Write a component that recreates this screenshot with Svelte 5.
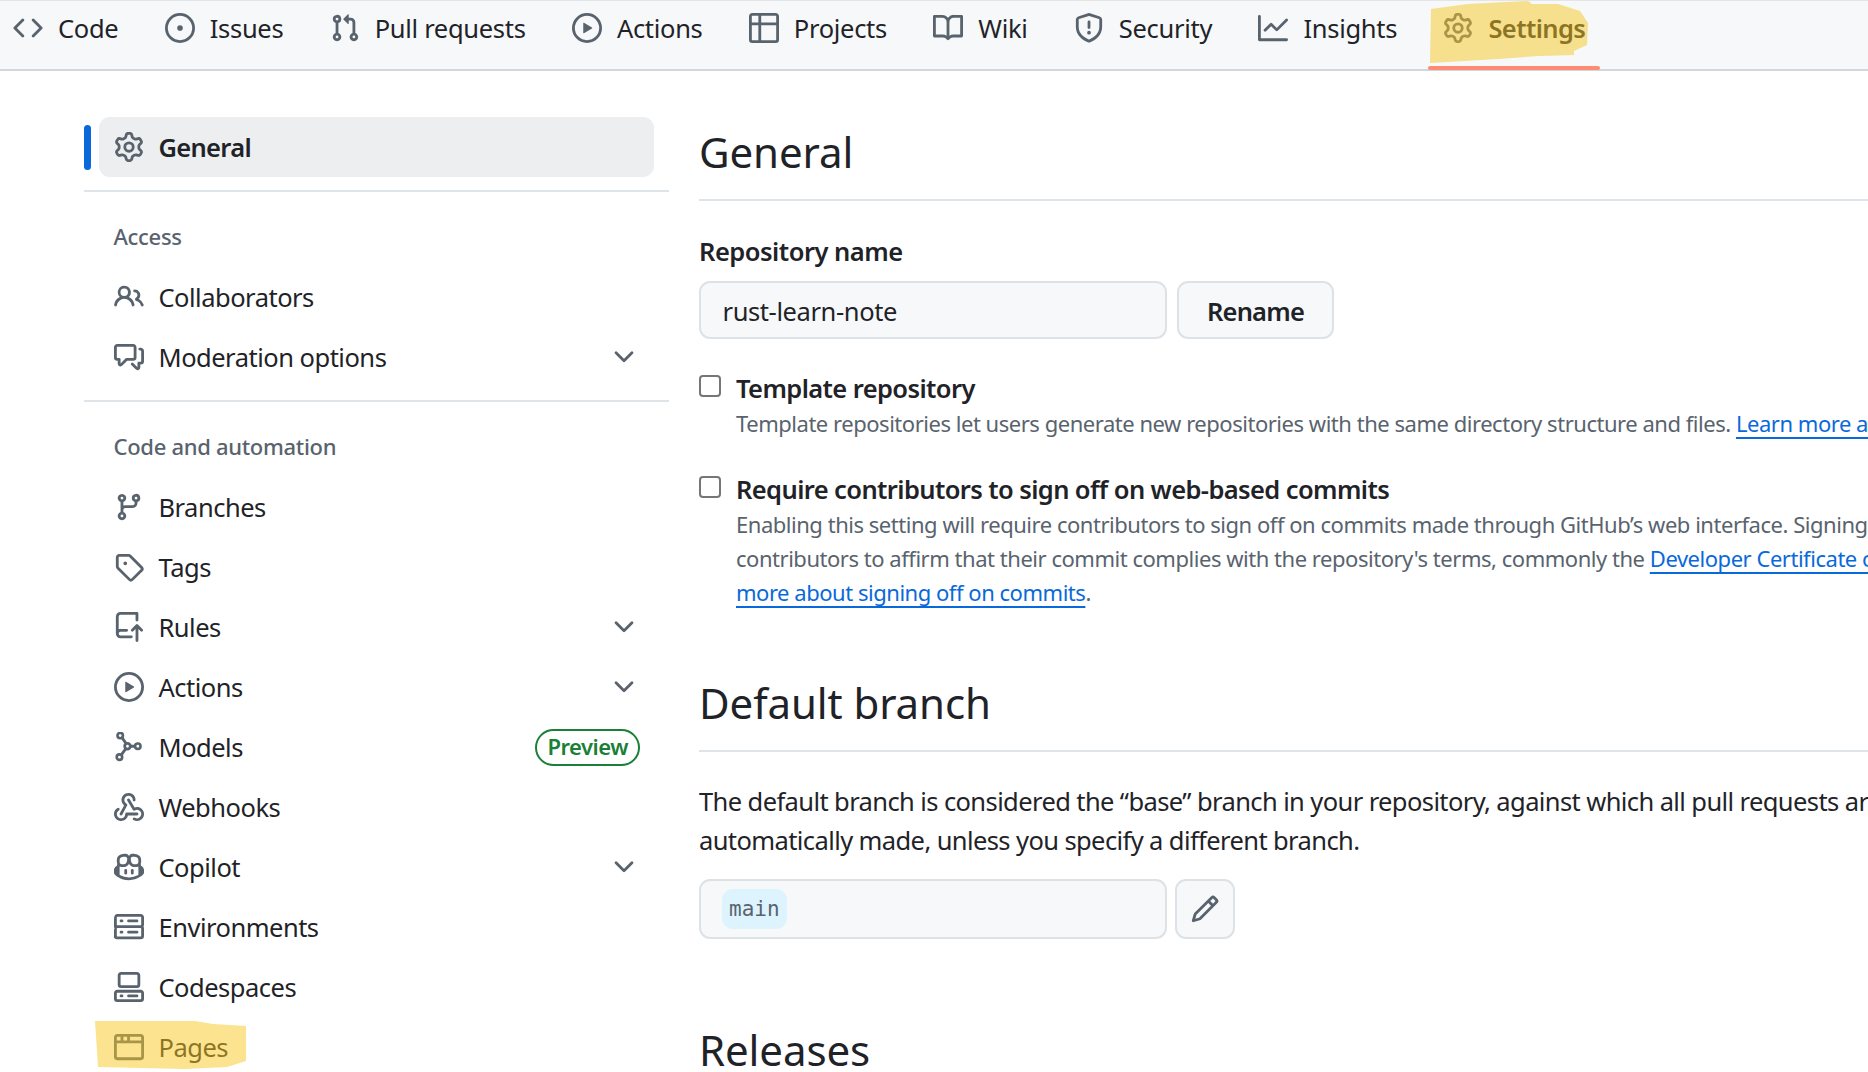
<script>
  const icons = {
    code: 'm11.28 3.22 4.25 4.25a.75.75 0 0 1 0 1.06l-4.25 4.25a.749.749 0 0 1-1.275-.326.749.749 0 0 1 .215-.734L13.94 8l-3.72-3.72a.749.749 0 0 1 .326-1.275.749.749 0 0 1 .734.215Zm-6.56 0a.751.751 0 0 1 1.042.018.751.751 0 0 1 .018 1.042L2.06 8l3.72 3.72a.749.749 0 0 1-.326 1.275.749.749 0 0 1-.734-.215L.47 8.53a.75.75 0 0 1 0-1.06Z',
    issue: 'M8 9.5a1.5 1.5 0 1 0 0-3 1.5 1.5 0 0 0 0 3Z M8 0a8 8 0 1 1 0 16A8 8 0 0 1 8 0ZM1.5 8a6.5 6.5 0 1 0 13 0 6.5 6.5 0 0 0-13 0Z',
    pull: 'M1.5 3.25a2.25 2.25 0 1 1 3 2.122v5.256a2.251 2.251 0 1 1-1.5 0V5.372A2.25 2.25 0 0 1 1.5 3.25Zm5.677-.177L9.573.677A.25.25 0 0 1 10 .854V2.5h1A2.5 2.5 0 0 1 13.5 5v5.628a2.251 2.251 0 1 1-1.5 0V5a1 1 0 0 0-1-1h-1v1.646a.25.25 0 0 1-.427.177L7.177 3.427a.25.25 0 0 1 0-.354ZM3.75 2.5a.75.75 0 1 0 0 1.5.75.75 0 0 0 0-1.5Zm0 9.5a.75.75 0 1 0 0 1.5.75.75 0 0 0 0-1.5Zm8.25.75a.75.75 0 1 0 1.5 0 .75.75 0 0 0-1.5 0Z',
    play: 'M8 0a8 8 0 1 1 0 16A8 8 0 0 1 8 0ZM1.5 8a6.5 6.5 0 1 0 13 0 6.5 6.5 0 0 0-13 0Zm4.879-2.773 4.264 2.559a.25.25 0 0 1 0 .428l-4.264 2.559A.25.25 0 0 1 6 10.559V5.442a.25.25 0 0 1 .379-.215Z',
    table: 'M0 1.75C0 .784.784 0 1.75 0h12.5C15.216 0 16 .784 16 1.75v12.5A1.75 1.75 0 0 1 14.25 16H1.75A1.75 1.75 0 0 1 0 14.25ZM6.5 6.5v8h7.75a.25.25 0 0 0 .25-.25V6.5Zm8-1.5V1.75a.25.25 0 0 0-.25-.25H6.5V5Zm-13 1.5v7.75c0 .138.112.25.25.25H5v-8ZM5 5V1.5H1.75a.25.25 0 0 0-.25.25V5Z',
    book: 'M0 1.75A.75.75 0 0 1 .75 1h4.253c1.227 0 2.317.59 3 1.501A3.743 3.743 0 0 1 11.006 1h4.245a.75.75 0 0 1 .75.75v10.5a.75.75 0 0 1-.75.75h-4.507a2.25 2.25 0 0 0-1.591.659l-.622.621a.75.75 0 0 1-1.06 0l-.622-.621A2.25 2.25 0 0 0 5.258 13H.75a.75.75 0 0 1-.75-.75Zm7.251 10.324.004-5.073-.002-2.253A2.25 2.25 0 0 0 5.003 2.5H1.5v9h3.757a3.75 3.75 0 0 1 1.994.574ZM8.755 4.75l-.004 7.322a3.752 3.752 0 0 1 1.992-.572H14.5v-9h-3.495a2.25 2.25 0 0 0-2.25 2.25Z',
    shield: 'M7.467.133a1.748 1.748 0 0 1 1.066 0l5.25 1.68A1.75 1.75 0 0 1 15 3.48V7c0 1.566-.32 3.182-1.303 4.682-.983 1.498-2.585 2.813-5.032 3.855a1.697 1.697 0 0 1-1.33 0c-2.447-1.042-4.049-2.357-5.032-3.855C1.32 10.182 1 8.566 1 7V3.48a1.75 1.75 0 0 1 1.217-1.667Zm.61 1.429a.25.25 0 0 0-.153 0l-5.25 1.68a.25.25 0 0 0-.174.238V7c0 1.358.275 2.666 1.057 3.86.784 1.194 2.121 2.34 4.366 3.297a.196.196 0 0 0 .154 0c2.245-.956 3.582-2.104 4.366-3.298C13.225 9.666 13.5 8.36 13.5 7V3.48a.251.251 0 0 0-.174-.237l-5.25-1.68ZM8.75 4.75v3a.75.75 0 0 1-1.5 0v-3a.75.75 0 0 1 1.5 0ZM9 10.5a1 1 0 1 1-2 0 1 1 0 0 1 2 0Z',
    graph: 'M1.5 1.75V13.5h13.75a.75.75 0 0 1 0 1.5H.75a.75.75 0 0 1-.75-.75V1.75a.75.75 0 0 1 1.5 0Zm14.28 2.53-5.25 5.25a.75.75 0 0 1-1.06 0L7 7.06 4.28 9.78a.751.751 0 0 1-1.042-.018.751.751 0 0 1-.018-1.042l3.25-3.25a.75.75 0 0 1 1.06 0L10 7.94l4.72-4.72a.751.751 0 0 1 1.042.018.751.751 0 0 1 .018 1.042Z',
    gear: 'M8 0a8.2 8.2 0 0 1 .701.031C9.444.095 9.99.645 10.16 1.29l.288 1.107c.018.066.079.158.212.224.231.114.454.243.668.386.123.082.233.09.299.071l1.103-.303c.644-.176 1.392.021 1.82.63.27.385.506.792.704 1.218.315.675.111 1.422-.364 1.891l-.814.806c-.049.048-.098.147-.088.294.016.257.016.515 0 .772-.01.147.038.246.088.294l.814.806c.475.469.679 1.216.364 1.891a7.977 7.977 0 0 1-.704 1.217c-.428.61-1.176.807-1.82.63l-1.102-.302c-.067-.019-.177-.011-.3.071a5.909 5.909 0 0 1-.668.386c-.133.066-.194.158-.211.224l-.29 1.106c-.168.646-.715 1.196-1.458 1.26a8.006 8.006 0 0 1-1.402 0c-.743-.064-1.289-.614-1.458-1.26l-.289-1.106c-.018-.066-.079-.158-.212-.224a5.738 5.738 0 0 1-.668-.386c-.123-.082-.233-.09-.299-.071l-1.103.303c-.644.176-1.392-.021-1.82-.63a8.12 8.12 0 0 1-.704-1.218c-.315-.675-.111-1.422.363-1.891l.815-.806c.05-.048.098-.147.088-.294a6.214 6.214 0 0 1 0-.772c.01-.147-.038-.246-.088-.294l-.815-.806C.635 6.045.431 5.298.746 4.623a7.92 7.92 0 0 1 .704-1.217c.428-.61 1.176-.807 1.82-.63l1.102.302c.067.019.177.011.3-.071.214-.143.437-.272.668-.386.133-.066.194-.158.211-.224l.29-1.106C6.009.645 6.556.095 7.299.03 7.53.01 7.764 0 8 0Zm-.571 1.525c-.036.003-.108.036-.137.146l-.289 1.105c-.147.561-.549.967-.998 1.189-.173.086-.34.183-.5.29-.417.278-.97.423-1.529.27l-1.103-.303c-.109-.03-.175.016-.195.045-.22.312-.412.644-.573.99-.014.031-.021.11.059.19l.815.806c.411.406.562.957.53 1.456a4.709 4.709 0 0 0 0 .582c.032.499-.119 1.05-.53 1.456l-.815.806c-.081.08-.073.159-.059.19.162.346.353.677.573.989.02.03.085.076.195.046l1.102-.303c.56-.153 1.113-.008 1.53.27.161.107.328.204.501.29.447.222.85.629.997 1.189l.289 1.105c.029.109.101.143.137.146a6.6 6.6 0 0 0 1.142 0c.036-.003.108-.036.137-.146l.289-1.105c.147-.561.549-.967.998-1.189.173-.086.34-.183.5-.29.417-.278.97-.423 1.529-.27l1.103.303c.109.029.175-.016.195-.045.22-.313.411-.644.573-.99.014-.031.021-.11-.059-.19l-.815-.806c-.411-.406-.562-.957-.53-1.456a4.709 4.709 0 0 0 0-.582c-.032-.499.119-1.05.53-1.456l.815-.806c.081-.08.073-.159.059-.19a6.464 6.464 0 0 0-.573-.989c-.02-.03-.085-.076-.195-.046l-1.102.303c-.56.153-1.113.008-1.53-.27a4.44 4.44 0 0 0-.501-.29c-.447-.222-.85-.629-.997-1.189l-.289-1.105c-.029-.11-.101-.143-.137-.146a6.6 6.6 0 0 0-1.142 0ZM11 8a3 3 0 1 1-6 0 3 3 0 0 1 6 0ZM9.5 8a1.5 1.5 0 1 0-3.001.001A1.5 1.5 0 0 0 9.5 8Z',
    people: 'M2 5.5a3.5 3.5 0 1 1 5.898 2.549 5.508 5.508 0 0 1 3.034 4.084.75.75 0 1 1-1.482.235 4 4 0 0 0-7.9 0 .75.75 0 0 1-1.482-.236A5.507 5.507 0 0 1 3.102 8.05 3.493 3.493 0 0 1 2 5.5ZM11 4a3.001 3.001 0 0 1 2.22 5.018 5.01 5.01 0 0 1 2.56 3.012.749.749 0 0 1-.885.954.752.752 0 0 1-.549-.514 3.507 3.507 0 0 0-2.522-2.372.75.75 0 0 1-.574-.73v-.352a.75.75 0 0 1 .416-.672A1.5 1.5 0 0 0 11 5.5.75.75 0 0 1 11 4Zm-5.5-.5a2 2 0 1 0-.001 3.999A2 2 0 0 0 5.5 3.5Z',
    comment: 'M1.75 1h8.5c.966 0 1.75.784 1.75 1.75v5.5A1.75 1.75 0 0 1 10.25 10H7.061l-2.574 2.573A1.458 1.458 0 0 1 2 11.543V10h-.25A1.75 1.75 0 0 1 0 8.25v-5.5C0 1.784.784 1 1.75 1ZM1.5 2.75v5.5c0 .138.112.25.25.25h1a.75.75 0 0 1 .75.75v2.19l2.72-2.72a.749.749 0 0 1 .53-.22h3.5a.25.25 0 0 0 .25-.25v-5.5a.25.25 0 0 0-.25-.25h-8.5a.25.25 0 0 0-.25.25Zm13 2a.25.25 0 0 0-.25-.25h-.5a.75.75 0 0 1 0-1.5h.5c.966 0 1.75.784 1.75 1.75v5.5A1.75 1.75 0 0 1 14.25 12H14v1.543a1.458 1.458 0 0 1-2.487 1.03L9.22 12.28a.749.749 0 0 1 .326-1.275.749.749 0 0 1 .734.215l2.22 2.22v-2.19a.75.75 0 0 1 .75-.75h1a.25.25 0 0 0 .25-.25Z',
    chevron: 'M12.78 5.22a.749.749 0 0 1 0 1.06l-4.25 4.25a.749.749 0 0 1-1.06 0L3.22 6.28a.749.749 0 1 1 1.06-1.06L8 8.939l3.72-3.719a.749.749 0 0 1 1.06 0Z',
    branch: 'M9.5 3.25a2.25 2.25 0 1 1 3 2.122V6A2.5 2.5 0 0 1 10 8.5H6a1 1 0 0 0-1 1v1.128a2.251 2.251 0 1 1-1.5 0V5.372a2.25 2.25 0 1 1 1.5 0v1.836A2.493 2.493 0 0 1 6 7h4a1 1 0 0 0 1-1v-.628A2.25 2.25 0 0 1 9.5 3.25Zm-6 0a.75.75 0 1 0 1.5 0 .75.75 0 0 0-1.5 0Zm8.25-.75a.75.75 0 1 0 0 1.5.75.75 0 0 0 0-1.5ZM4.25 12a.75.75 0 1 0 0 1.5.75.75 0 0 0 0-1.5Z',
    tag: 'M1 7.775V2.75C1 1.784 1.784 1 2.75 1h5.025c.464 0 .91.184 1.238.513l6.25 6.25a1.75 1.75 0 0 1 0 2.474l-5.026 5.026a1.75 1.75 0 0 1-2.474 0l-6.25-6.25A1.752 1.752 0 0 1 1 7.775Zm1.5 0c0 .066.026.13.073.177l6.25 6.25a.25.25 0 0 0 .354 0l5.025-5.025a.25.25 0 0 0 0-.354l-6.25-6.25a.25.25 0 0 0-.177-.073H2.75a.25.25 0 0 0-.25.25ZM6 5a1 1 0 1 1 0 2 1 1 0 0 1 0-2Z',
    rules: 'M1 2.5A2.5 2.5 0 0 1 3.5 0h8.75a.75.75 0 0 1 .75.75v3.5a.75.75 0 0 1-1.5 0V1.5h-8a1 1 0 0 0-1 1v6.708A2.492 2.492 0 0 1 3.5 9h3.25a.75.75 0 0 1 0 1.5H3.5a1 1 0 0 0 0 2h5.75a.75.75 0 0 1 0 1.5H3.5A2.5 2.5 0 0 1 1 11.5Zm13.23 7.79h-.001l-1.224-1.224v6.184a.75.75 0 0 1-1.5 0V9.066L10.28 10.29a.75.75 0 0 1-1.06-1.061l2.505-2.504a.75.75 0 0 1 1.06 0L15.29 9.23a.751.751 0 0 1-.018 1.042.751.751 0 0 1-1.042.018Z',
    webhook: 'M5.5 4.25a2.25 2.25 0 0 1 4.5 0 .75.75 0 0 0 1.5 0 3.75 3.75 0 1 0-6.14 2.889l-2.272 4.258a.75.75 0 0 0 1.324.706L7 7.25a.75.75 0 0 0-.309-1.015A2.25 2.25 0 0 1 5.5 4.25Z M7.364 3.607a.75.75 0 0 1 1.03.257l2.608 4.349a3.75 3.75 0 1 1-.628 6.785.75.75 0 0 1 .752-1.299 2.25 2.25 0 1 0-.033-3.88.75.75 0 0 1-1.03-.256L7.107 4.636a.75.75 0 0 1 .257-1.03Z M2.9 8.776A.75.75 0 0 1 2.625 9.8 2.25 2.25 0 1 0 6 11.75a.75.75 0 0 1 .75-.751h5.5a.75.75 0 0 1 0 1.5H7.425a3.751 3.751 0 1 1-5.55-3.998.75.75 0 0 1 1.024.274Z',
    copilot: 'M7.998 15.035c-4.562 0-7.873-2.914-7.998-3.749V9.338c.085-.628.677-1.686 1.588-2.065.013-.07.024-.143.036-.218.029-.183.06-.384.126-.612-.201-.508-.254-1.084-.254-1.656 0-.87.128-1.769.693-2.484.579-.733 1.494-1.124 2.724-1.261 1.206-.134 2.262.034 2.944.765.05.053.096.108.139.165.044-.057.094-.112.143-.165.682-.731 1.738-.899 2.944-.765 1.23.137 2.145.528 2.724 1.261.566.715.693 1.614.693 2.484 0 .572-.053 1.148-.254 1.656.066.228.098.429.126.612.012.076.024.148.037.218.924.385 1.522 1.471 1.591 2.095v1.872c0 .766-3.351 3.795-8.002 3.795Zm0-1.485c2.28 0 4.584-1.11 5.002-1.433V7.862l-.023-.116c-.49.21-1.075.291-1.727.291-1.146 0-2.059-.327-2.71-.991A3.222 3.222 0 0 1 8 6.303a3.24 3.24 0 0 1-.544.743c-.65.664-1.563.991-2.71.991-.652 0-1.236-.081-1.727-.291l-.023.116v4.255c.419.323 2.722 1.433 5.002 1.433ZM6.762 2.83c-.193-.206-.637-.413-1.682-.297-1.019.113-1.479.404-1.713.7-.247.312-.369.789-.369 1.554 0 .793.129 1.171.308 1.371.162.181.519.379 1.442.379.853 0 1.339-.235 1.638-.54.315-.322.527-.827.617-1.553.117-.935-.037-1.395-.241-1.614Zm4.155-.297c-1.044-.116-1.488.091-1.681.297-.204.219-.359.679-.242 1.614.091.726.303 1.231.618 1.553.299.305.784.54 1.638.54.922 0 1.28-.198 1.442-.379.179-.2.308-.578.308-1.371 0-.765-.123-1.242-.37-1.554-.233-.296-.693-.587-1.713-.7Z M6.25 9.037a.75.75 0 0 1 .75.75v1.501a.75.75 0 0 1-1.5 0V9.787a.75.75 0 0 1 .75-.75Zm4.25.75v1.501a.75.75 0 0 1-1.5 0V9.787a.75.75 0 0 1 1.5 0Z',
    server: 'M1.75 1h12.5c.966 0 1.75.784 1.75 1.75v4c0 .372-.116.717-.314 1 .198.283.314.628.314 1v4a1.75 1.75 0 0 1-1.75 1.75H1.75A1.75 1.75 0 0 1 0 13.75v-4c0-.372.116-.717.314-1a1.739 1.739 0 0 1-.314-1v-4C0 1.784.784 1 1.75 1ZM1.5 2.75v4c0 .138.112.25.25.25h12.5a.25.25 0 0 0 .25-.25v-4a.25.25 0 0 0-.25-.25H1.75a.25.25 0 0 0-.25.25Zm.25 5.75a.25.25 0 0 0-.25.25v4c0 .138.112.25.25.25h12.5a.25.25 0 0 0 .25-.25v-4a.25.25 0 0 0-.25-.25ZM7 4.75A.75.75 0 0 1 7.75 4h4.5a.75.75 0 0 1 0 1.5h-4.5A.75.75 0 0 1 7 4.75ZM7.75 10h4.5a.75.75 0 0 1 0 1.5h-4.5a.75.75 0 0 1 0-1.5ZM3 4.75A.75.75 0 0 1 3.75 4h.5a.75.75 0 0 1 0 1.5h-.5A.75.75 0 0 1 3 4.75ZM3.75 10h.5a.75.75 0 0 1 0 1.5h-.5a.75.75 0 0 1 0-1.5Z',
    codespaces: 'M0 11.25c0-.966.784-1.75 1.75-1.75h12.5c.966 0 1.75.784 1.75 1.75v3A1.75 1.75 0 0 1 14.25 16H1.75A1.75 1.75 0 0 1 0 14.25Zm2-9.5C2 .784 2.784 0 3.75 0h8.5C13.216 0 14 .784 14 1.75v5a1.75 1.75 0 0 1-1.75 1.75h-8.5A1.75 1.75 0 0 1 2 6.75Zm1.75-.25a.25.25 0 0 0-.25.25v5c0 .138.112.25.25.25h8.5a.25.25 0 0 0 .25-.25v-5a.25.25 0 0 0-.25-.25Zm-2 9.5a.25.25 0 0 0-.25.25v3c0 .138.112.25.25.25h12.5a.25.25 0 0 0 .25-.25v-3a.25.25 0 0 0-.25-.25Z M7 12.75a.75.75 0 0 1 .75-.75h4.5a.75.75 0 0 1 0 1.5h-4.5a.75.75 0 0 1-.75-.75Zm-4 0a.75.75 0 0 1 .75-.75h.5a.75.75 0 0 1 0 1.5h-.5a.75.75 0 0 1-.75-.75Z',
    browser: 'M0 2.75C0 1.784.784 1 1.75 1h12.5c.966 0 1.75.784 1.75 1.75v10.5A1.75 1.75 0 0 1 14.25 15H1.75A1.75 1.75 0 0 1 0 13.25ZM14.5 6h-13v7.25c0 .138.112.25.25.25h12.5a.25.25 0 0 0 .25-.25Zm-6-3.5v2h6V2.75a.25.25 0 0 0-.25-.25ZM5 2.5v2h2v-2Zm-3.25 0a.25.25 0 0 0-.25.25V4.5h2v-2Z',
    pencil: 'M11.013 1.427a1.75 1.75 0 0 1 2.474 0l1.086 1.086a1.75 1.75 0 0 1 0 2.474l-8.61 8.61c-.21.21-.47.364-.756.445l-3.251.93a.75.75 0 0 1-.927-.928l.929-3.25c.081-.286.235-.547.445-.758l8.61-8.61Zm.176 4.823L9.75 4.81l-6.286 6.287a.253.253 0 0 0-.064.108l-.558 1.953 1.953-.558a.253.253 0 0 0 .108-.064Zm1.238-3.763a.25.25 0 0 0-.354 0L10.811 3.75l1.439 1.44 1.263-1.263a.25.25 0 0 0 0-.354Z'
  };

  const tabs = [
    { icon: 'code', label: 'Code' },
    { icon: 'issue', label: 'Issues' },
    { icon: 'pull', label: 'Pull requests' },
    { icon: 'play', label: 'Actions' },
    { icon: 'table', label: 'Projects' },
    { icon: 'book', label: 'Wiki' },
    { icon: 'shield', label: 'Security' },
    { icon: 'graph', label: 'Insights' }
  ];

  const automation = [
    { icon: 'branch', label: 'Branches' },
    { icon: 'tag', label: 'Tags' },
    { icon: 'rules', label: 'Rules', more: true },
    { icon: 'play', label: 'Actions', more: true },
    { icon: 'models', label: 'Models', preview: true },
    { icon: 'webhook', label: 'Webhooks' },
    { icon: 'copilot', label: 'Copilot', more: true },
    { icon: 'server', label: 'Environments' },
    { icon: 'codespaces', label: 'Codespaces' },
    { icon: 'browser', label: 'Pages', marked: true }
  ];
</script>

{#snippet icon(name)}
  {#if name === 'models'}
    <svg class="icon" viewBox="0 0 16 16" fill="none" stroke="currentColor">
      <path stroke-width="1.5" d="M4 2.6 6.6 6.4M3.6 12.6 6.2 9M8.8 7.6h2.4" />
      <circle cx="3.3" cy="1.9" r="1.45" stroke-width="1.4" />
      <circle cx="7.2" cy="7.6" r="1.5" stroke-width="1.5" />
      <circle cx="12.7" cy="7.6" r="1.45" stroke-width="1.4" />
      <circle cx="2.9" cy="13.4" r="1.45" stroke-width="1.4" />
    </svg>
  {:else}
    <svg class="icon" viewBox="0 0 16 16" fill="currentColor"><path d={icons[name]} /></svg>
  {/if}
{/snippet}

<nav class="tabs">
  {#each tabs as tab}
    <a class="tab" href="#top">{@render icon(tab.icon)}<span>{tab.label}</span></a>
  {/each}
  <a class="tab selected" href="#top">
    {@render icon('gear')}<span>Settings</span>
    <svg class="marker settings-mark" viewBox="0 0 160 62" preserveAspectRatio="none">
      <path d="M3 8 40 3 100 0 104 3 130 3 152 10 160 22 159 44 146 50 146 54 110 55 70 58 2 62Z" />
    </svg>
  </a>
</nav>

<div class="page">
  <aside class="sidebar">
    <a class="row current" href="#top">{@render icon('gear')}<span>General</span></a>
    <hr />
    <h3>Access</h3>
    <a class="row" href="#top">{@render icon('people')}<span>Collaborators</span></a>
    <a class="row" href="#top">
      {@render icon('comment')}<span>Moderation options</span>
      <svg class="icon chevron" viewBox="0 0 16 16" fill="currentColor"><path d={icons.chevron} /></svg>
    </a>
    <hr />
    <h3>Code and automation</h3>
    {#each automation as item}
      <a class="row" href="#top">
        {@render icon(item.icon)}<span>{item.label}</span>
        {#if item.more}
          <svg class="icon chevron" viewBox="0 0 16 16" fill="currentColor"><path d={icons.chevron} /></svg>
        {/if}
        {#if item.preview}<b class="preview">Preview</b>{/if}
        {#if item.marked}
          <svg class="marker pages-mark" viewBox="0 0 151 48" preserveAspectRatio="none">
            <path d="M0 0 100 0 118 3 151 5 151 40 132 46 90 48 3 46 2 30Z" />
          </svg>
        {/if}
      </a>
    {/each}
  </aside>

  <main>
    <h2>General</h2>
    <label class="field-label" for="repo-name">Repository name</label>
    <div class="input-row">
      <input id="repo-name" class="input" value="rust-learn-note" />
      <button class="btn">Rename</button>
    </div>

    <div class="check first">
      <input type="checkbox" />
      <div>
        <strong>Template repository</strong>
        <p>Template repositories let users generate new repositories with the same directory structure and files. <a href="#top">Learn more about template repositories.</a></p>
      </div>
    </div>

    <div class="check">
      <input type="checkbox" />
      <div>
        <strong>Require contributors to sign off on web-based commits</strong>
        <p>Enabling this setting will require contributors to sign off on commits made through GitHub’s web interface. Signing off is a way for<br />contributors to affirm that their commit complies with the repository's terms, commonly the <a href="#top">Developer Certificate of Origin.</a> Learn<br /><a href="#top">more about signing off on commits</a>.</p>
      </div>
    </div>

    <h2 class="branch-title">Default branch</h2>
    <p class="lead">The default branch is considered the “base” branch in your repository, against which all pull requests are made and code commits are<br />automatically made, unless you specify a different branch.</p>
    <div class="input-row branch-row">
      <div class="input branch-box"><code>main</code></div>
      <button class="btn edit" aria-label="Edit">{@render icon('pencil')}</button>
    </div>

    <h2 class="releases-title">Releases</h2>
  </main>
</div>

<style>
  :global(html), :global(body) {
    margin: 0;
    height: 100%;
    overflow: hidden;
    background: #fff;
  }
  nav, .page, input, button {
    font-family: "Noto Sans", "Open Sans", sans-serif;
  }
  .icon {
    width: 30px;
    height: 30px;
    flex: none;
    color: #59636e;
  }
  a {
    color: inherit;
    text-decoration: none;
  }

  .tabs {
    display: flex;
    gap: 16.3px;
    height: 68px;
    background: #f6f8fa;
    border-top: 1px solid #e3e5e7;
    border-bottom: 2px solid #d0d7de;
    font-size: 25.5px;
    letter-spacing: -0.3px;
    color: #1f2328;
    white-space: nowrap;
  }
  .tab {
    position: relative;
    display: flex;
    align-items: center;
    gap: 15px;
    height: 54px;
    padding: 0 15px;
  }
  .tab:first-child {
    padding-left: 13px;
  }
  .selected {
    font-weight: 600;
    letter-spacing: -0.6px;
    z-index: 1;
  }
  .selected::after {
    content: "";
    position: absolute;
    left: 0;
    right: 0;
    top: 65px;
    height: 4px;
    border-radius: 2px;
    background: #fd8c73;
  }
  .marker {
    position: absolute;
  }
  .marker path {
    fill: #f7c81f;
    fill-opacity: 0.5;
  }
  .settings-mark {
    left: 0;
    top: 0;
    width: 160px;
    height: 62px;
  }

  .page {
    display: flex;
    color: #1f2328;
  }
  .sidebar {
    flex: none;
    width: 585px;
    margin: 46px 0 0 84px;
    font-size: 25.5px;
    letter-spacing: -0.5px;
  }
  .row {
    position: relative;
    display: flex;
    align-items: center;
    gap: 15px;
    height: 60px;
    padding: 0 30px 0 29.5px;
    white-space: nowrap;
  }
  .row > span {
    flex: 1;
  }
  .current {
    margin: 0 15px;
    padding-left: 14.5px;
    border-radius: 11px;
    background: #eceef0;
    font-weight: 600;
    letter-spacing: -0.7px;
  }
  .current::before {
    content: "";
    position: absolute;
    left: -15px;
    top: 8px;
    width: 7px;
    height: 45px;
    border-radius: 4px;
    background: #0969da;
  }
  .preview {
    box-sizing: border-box;
    height: 37px;
    padding: 0 10px;
    margin-right: -1px;
    border: 2px solid #1a7f37;
    border-radius: 19px;
    color: #1a7f37;
    font-size: 22px;
    font-weight: 600;
    line-height: 31px;
    letter-spacing: -0.5px;
  }
  .pages-mark {
    left: 11px;
    top: 4px;
    width: 151px;
    height: 48px;
  }
  hr {
    height: 2px;
    margin: 13px 0 0;
    border: 0;
    background: #dfe4e9;
  }
  h3 {
    margin: 0;
    padding: 23px 0 0 29.5px;
    height: 52px;
    font-size: 22px;
    font-weight: 500;
    line-height: 42px;
    letter-spacing: -0.3px;
    color: #59636e;
    white-space: nowrap;
  }

  main {
    flex: none;
    margin-left: 30px;
    white-space: nowrap;
  }
  h2 {
    margin: 0;
    height: 84px;
    box-sizing: border-box;
    width: 1300px;
    border-bottom: 2px solid #dfe4e9;
    font-size: 42px;
    font-weight: 400;
    line-height: 70px;
    letter-spacing: -0.1px;
  }
  main > h2:first-child {
    margin-top: 46px;
  }
  .field-label {
    display: block;
    margin-top: 31px;
    font-size: 25.5px;
    font-weight: 600;
    line-height: 38px;
    letter-spacing: -0.5px;
  }
  .input-row {
    display: flex;
    gap: 10px;
    margin-top: 11px;
  }
  .input {
    box-sizing: border-box;
    width: 468px;
    height: 58px;
    padding: 2px 21.5px 0;
    border: 2px solid #dde2e7;
    border-radius: 11px;
    background: #f6f8fa;
    font-size: 25.5px;
    letter-spacing: -0.4px;
    color: #1f2328;
  }
  .btn {
    width: 157px;
    height: 58px;
    padding: 2px 0 0;
    border: 2px solid #dde2e7;
    border-radius: 11px;
    background: #f6f8fa;
    font-size: 25.5px;
    font-weight: 600;
    letter-spacing: -0.8px;
    color: #1f2328;
  }
  .check {
    display: flex;
    gap: 15px;
    margin-top: 32px;
  }
  .check.first {
    margin-top: 32px;
  }
  .check input {
    appearance: none;
    flex: none;
    box-sizing: border-box;
    width: 22px;
    height: 22px;
    margin: 4px 0 0;
    padding: 0;
    border: 2px solid #767676;
    border-radius: 4px;
    background: #fff;
  }
  strong {
    display: block;
    margin-bottom: 1px;
    font-size: 25.5px;
    font-weight: 600;
    line-height: 34px;
    letter-spacing: -0.6px;
  }
  .check p {
    margin: 0;
    font-size: 22px;
    line-height: 34px;
    letter-spacing: -0.47px;
    color: #59636e;
  }
  .check a {
    color: #0969da;
    text-decoration: underline;
    text-decoration-thickness: 2px;
    text-underline-offset: 5px;
  }
  .branch-title {
    margin-top: 59px;
  }
  .lead {
    margin: 30px 0 0;
    font-size: 25.5px;
    line-height: 39px;
    letter-spacing: -0.6px;
  }
  .branch-row {
    margin-top: 19px;
    gap: 8px;
  }
  .branch-box {
    display: flex;
    align-items: center;
    height: 60px;
    padding: 0 21px;
  }
  code {
    height: 40px;
    padding: 0 7px;
    border-radius: 11px;
    background: #ddf4ff;
    font-family: "DejaVu Sans Mono", "Liberation Mono", monospace;
    font-size: 21px;
    letter-spacing: 0;
    line-height: 40px;
    color: #59636e;
  }
  .edit {
    display: flex;
    align-items: center;
    justify-content: center;
    width: 60px;
    height: 60px;
    padding: 0;
  }
  .releases-title {
    margin-top: 76px;
    border: 0;
  }
</style>
